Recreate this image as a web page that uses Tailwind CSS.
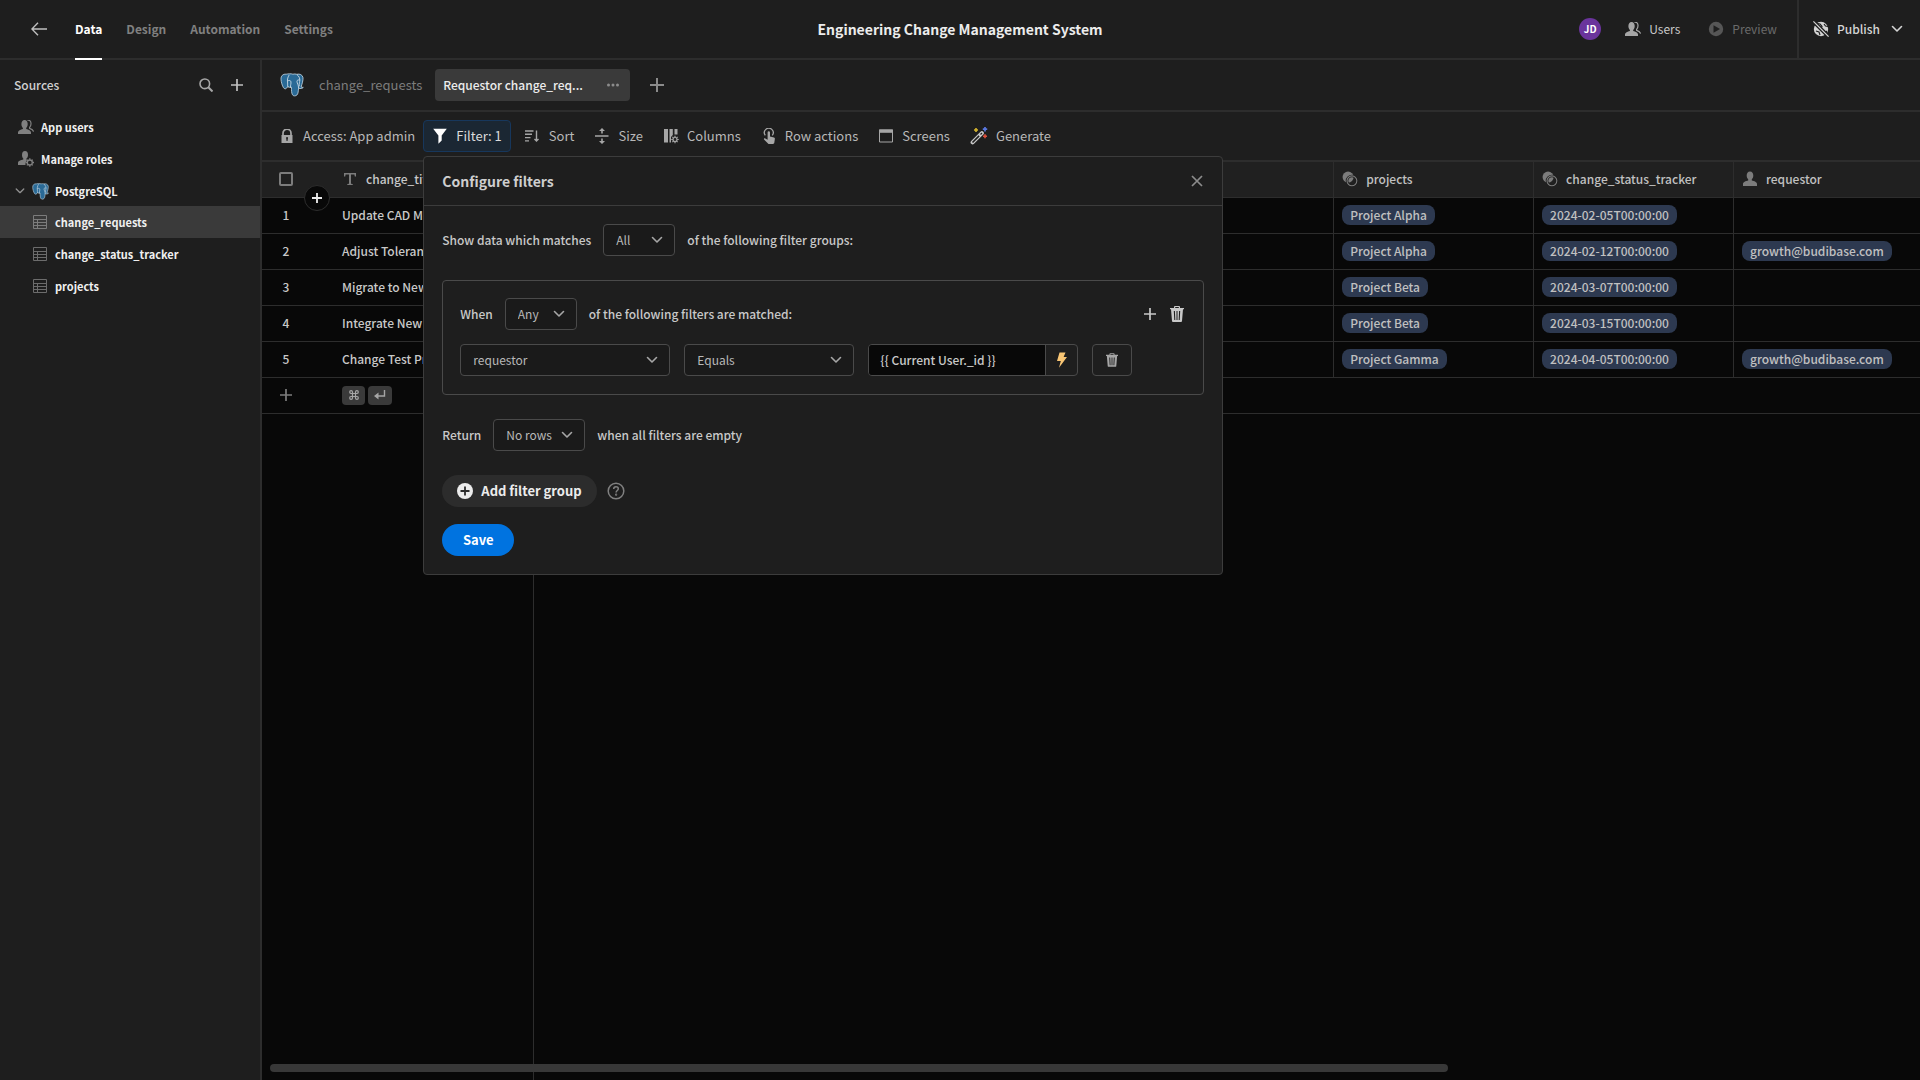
<!DOCTYPE html>
<html lang="en">
<head>
<meta charset="utf-8">
<title>Engineering Change Management System</title>
<script src="https://cdn.jsdelivr.net/npm/@tailwindcss/browser@4"></script>
</head>
<body class="h-screen overflow-hidden bg-[#1e1e1e] font-['Noto_Sans_CJK_SC',sans-serif] text-[12px] leading-5 text-[#c8c8c8]">
<svg class="hidden" aria-hidden="true">
  <defs>
    <symbol id="chev" viewBox="0 0 12 12"><path d="M1.500 3.500 6 8l4.500-4.500" fill="none" stroke="currentColor" stroke-width="1.600" stroke-linecap="round" stroke-linejoin="round"/></symbol>
    <symbol id="plus" viewBox="0 0 12 12"><path d="M6 0v12M0 6h12" fill="none" stroke="currentColor" stroke-width="1.700"/></symbol>
    <symbol id="users" viewBox="0 0 16 14"><path d="M6.600 0C4.500 0 3.400 1.700 3.400 4c0 1.600.6 3 1.500 3.900v1C2.600 9.400 0 10.400 0 12.300V14h13v-1.700c0-1.900-2.500-2.900-4.800-3.400v-1C9.100 7 9.700 5.600 9.700 4 9.700 1.700 8.700 0 6.600 0z" fill="currentColor"/><path d="M9.500 .4c2-.8 3.600.8 3.500 3.300 0 1.500-.6 2.800-1.400 3.600v1c1.700.5 3.600 1.700 4 3.400" fill="none" stroke="currentColor" stroke-width="1.200"/></symbol>
    <symbol id="trash" viewBox="0 0 14 16"><path fill-rule="evenodd" d="M5 0h4a1 1 0 0 1 1 1v1h4v1.300h-1L12 15a1 1 0 0 1-1 1H3a1 1 0 0 1-1-1L1 3.300H0V2h4V1a1 1 0 0 1 1-1zm.2 1.100V2h3.600v-.9zM3.800 5l.5 9h1L4.900 5zm2.700 0v9h1V5zm2.600 0-.4 9h1l.5-9z" fill="currentColor"/></symbol>
    <symbol id="tbl" viewBox="0 0 14 14"><path d="M.5.5h13v13H.5zM.5 4.500h13M.5 7.500h13M.5 10.500h13M4.500 4.500v9" fill="none" stroke="currentColor"/></symbol>
    <symbol id="rel" viewBox="0 0 14 15"><circle cx="5.200" cy="5.700" r="5.200" fill="currentColor"/><circle cx="8.800" cy="9.200" r="4.600" fill="none" stroke="#1e1e1e" stroke-width="2.400"/><circle cx="8.800" cy="9.200" r="4.600" fill="none" stroke="currentColor" stroke-width="1"/></symbol>
    <symbol id="pg" viewBox="0 0 24 24">
      <path d="M6.200 1.200C2.800.8.800 3 1 6.300c.1 2.500 1.200 6.400 2.500 8.400 1 1.500 2.300 1.400 3.200.3l1.100-1.300c.6.400 1.300.6 2 .6h1.700c-.1 2.600 0 5.700.9 7.400.8 1.500 3.300 1.500 4.500.3 1-1 1.200-2.500 1.400-4.200l.3-2.600c2 .6 3.700.4 4.700-.8-.7-.1-1.500 0-2.200-.4C22 11.200 23.300 7 23 4.700 22.600 1.800 19.600.5 16.800 1.300c-1.200-.4-2.600-.5-3.900-.1-2-.7-4.700-.4-6.700 0z" fill="#2a6a96" stroke="#c9dbe6" stroke-width=".8" stroke-linejoin="round"/>
      <path d="M9 2.200C7.400 4.500 7.200 7.500 7.600 10c.2 1.500-.3 2.600.3 3.700M8 7.800c1.200-.6 2.600-.5 2.900.9.400 1.900-.6 3.300-.4 5.500M17.200 1.800c1.900 1.400 2.800 3.800 2.600 5.800-.1 1.500-.8 2.600-.6 5.300M19.500 7c-1.300-.3-2.500 0-2.500 1.500 0 2.200 1.600 2.800 1.600 6.500" fill="none" stroke="#dbe6ee" stroke-width=".8" stroke-linecap="round"/>
    </symbol>
  </defs>
</svg>

<div class="flex h-full flex-col">
  <header class="flex h-[60px] shrink-0 items-stretch border-b-2 border-[#2d2d2d]">
    <div class="flex flex-1 items-stretch">
      <button class="mr-7 ml-[31px] text-[#c0c0c0]" aria-label="Back"><svg class="h-3.5 w-4" viewBox="0 0 16 14" fill="none" stroke="currentColor" stroke-width="1.400"><path d="M7 .8.900 7 7 13.200M1 7h15"/></svg></button>
      <nav class="-mb-0.5 flex gap-6 font-bold text-[#808080]">
        <a href="#" class="flex items-center border-b-2 border-white text-white">Data</a>
        <a href="#" class="flex items-center border-b-2 border-transparent">Design</a>
        <a href="#" class="flex items-center border-b-2 border-transparent">Automation</a>
        <a href="#" class="flex items-center border-b-2 border-transparent">Settings</a>
      </nav>
    </div>
    <h1 class="flex items-center text-[14px] font-bold text-[#ececec]">Engineering Change Management System</h1>
    <div class="flex flex-1 items-stretch justify-end">
      <div class="flex items-center">
        <span class="flex size-[22px] items-center justify-center rounded-full bg-[#6a349c] text-[10px] font-bold text-white">JD</span>
        <button class="ml-6 flex items-center gap-2"><svg class="h-3.5 w-4 text-[#a6a6a6]"><use href="#users"/></svg>Users</button>
        <button class="ml-7 flex items-center gap-2 text-[#6a6a6a]"><svg class="size-4" viewBox="0 0 16 16"><circle cx="8" cy="8" r="7.200" fill="#565656"/><path d="M5.500 4.300 12 8l-6.500 3.700z" fill="#1e1e1e"/></svg>Preview</button>
      </div>
      <button class="ml-5 flex items-center border-l-2 border-[#2d2d2d] pr-[17px] pl-3.5 font-medium text-[#d4d4d4]">
        <svg class="mr-2 size-4" viewBox="0 0 16 16"><circle cx="8" cy="8" r="7.200" fill="currentColor"/><path d="M4.500 2.500 7 3l2 2.300L8 8M3 10l3 1 1 3M11 3l1.500 2 2.500.5M12 12l2-2" stroke="#1e1e1e" stroke-width="1.200" fill="none"/><path d="M-.5 1 14.900 16.400M1-.5 16.400 14.900" stroke="#1e1e1e" stroke-width="1.600"/><path d="M.4.400 15.600 15.600" stroke="currentColor" stroke-width="1.200"/></svg>Publish
        <svg class="ml-[11px] size-3"><use href="#chev"/></svg>
      </button>
    </div>
  </header>

  <div class="flex min-h-0 flex-1">
    <aside class="w-[262px] shrink-0 border-r-2 border-[#2d2d2d]">
      <div class="flex h-[50px] items-center pr-[17px] pl-3.5 font-medium text-[#d0d0d0]">
        <span class="flex-1">Sources</span>
        <button class="mr-[18px] text-[#a6a6a6]" aria-label="Search"><svg class="size-3.5" viewBox="0 0 14 14" fill="none" stroke="currentColor"><circle cx="5.800" cy="5.800" r="4.800" stroke-width="1.600"/><path d="m9.300 9.300 4.200 4.200" stroke-width="2"/></svg></button>
        <button class="text-[#c0c0c0]" aria-label="Add source"><svg class="size-3"><use href="#plus"/></svg></button>
      </div>
      <nav class="text-[11px] font-bold text-[#f0f0f0]">
        <a href="#" class="mt-px flex h-8 items-center pl-[18px]"><svg class="mr-[7px] h-3.5 w-4 text-[#808080]"><use href="#users"/></svg>App users</a>
        <a href="#" class="flex h-8 items-center pl-[18px]"><svg class="mr-[7px] size-4 text-[#808080]" viewBox="0 0 16 16"><path d="M7 0C5 0 4 1.700 4 3.900c0 1.500.5 2.900 1.300 3.700v1C3 9.100 0 10 0 12v2h7.500c-.3-2 .5-4 1.500-5l-.6-.5V7.600C9.500 6.800 10 5.400 10 3.900 10 1.700 9 0 7 0z" fill="currentColor"/><circle cx="11.800" cy="11.500" r="2.500" fill="none" stroke="currentColor" stroke-width="1.300"/><path d="M11.800 7.300v1.500M11.800 14.200v1.500M7.600 11.500h1.500M14.500 11.500H16M8.900 8.600l1 1M13.700 13.400l1 1M14.700 8.600l-1 1M9.900 13.400l-1 1" stroke="currentColor" stroke-width="1.300"/></svg>Manage roles</a>
        <a href="#" class="flex h-8 items-center pl-[15px]"><svg class="mr-[7px] size-2.5 text-[#909090]" viewBox="0 0 12 12"><use href="#chev"/></svg><svg class="mr-1.5 size-[17px]"><use href="#pg"/></svg>PostgreSQL</a>
        <a href="#" class="-mt-px flex h-8 items-center bg-[#3a3a3a] pl-[33px]"><svg class="mr-2 size-3.5 text-[#7c7c7c]"><use href="#tbl"/></svg>change_requests</a>
        <a href="#" class="flex h-8 items-center pl-[33px]"><svg class="mr-2 size-3.5 text-[#6c6c6c]"><use href="#tbl"/></svg>change_status_tracker</a>
        <a href="#" class="flex h-8 items-center pl-[33px]"><svg class="mr-2 size-3.5 text-[#6c6c6c]"><use href="#tbl"/></svg>projects</a>
      </nav>
    </aside>

    <main class="flex min-w-0 flex-1 flex-col">
      <div class="flex h-[52px] shrink-0 items-center border-b-2 border-[#2d2d2d] pl-[18px]">
        <svg class="size-6"><use href="#pg"/></svg>
        <a href="#" class="ml-[15px] text-[13px] text-[#7c7c7c]">change_requests</a>
        <div class="ml-[13px] flex h-8 w-[195px] items-center rounded bg-[#3a3a3a] pr-2.5 pl-2">
          <a href="#" class="font-medium whitespace-nowrap text-[#ececec]">Requestor change_req...</a>
          <button class="ml-auto text-[#8c8c8c]" aria-label="View options"><svg class="h-1 w-3.5" viewBox="0 0 14 4" fill="currentColor"><circle cx="2.500" cy="2" r="1.500"/><circle cx="7" cy="2" r="1.500"/><circle cx="11.500" cy="2" r="1.500"/></svg></button>
        </div>
        <button class="ml-5 text-[#8c8c8c]" aria-label="Add view"><svg class="size-3.5" viewBox="0 0 12 12"><use href="#plus"/></svg></button>
      </div>

      <div class="flex h-[50px] shrink-0 items-center gap-1 border-b-2 border-[#2d2d2d] pl-2 text-[13px] text-[#b8b8b8]">
        <button class="flex h-8 items-center gap-2 pr-1 pl-[9px]"><svg class="h-3.5 w-4 text-[#a6a6a6]" viewBox="0 0 16 14"><path d="M4 6V4.200a4 4 0 0 1 8 0V6" fill="none" stroke="currentColor" stroke-width="1.700"/><path fill-rule="evenodd" d="M3 6h10.500v8h-11V6zm4.200 3.500.4 2.500h.9l.4-2.500a1 1 0 1 0-1.700 0z" fill="currentColor"/></svg>Access: App admin</button>
        <div class="relative mr-0.5">
          <button class="flex h-8 items-center gap-2 rounded border border-[#17375c] bg-[#1b2733] px-2 text-[#dcdcdc]"><svg class="size-4" viewBox="0 0 16 16"><path d="M1.200.8h13.600L9.700 7.500v5L6.400 15.800V7.500z" fill="#fff"/></svg>Filter: 1</button>
          <section class="absolute top-9 left-0 z-10 w-[800px] rounded border border-[#3c3c3c] bg-[#1e1e1e] text-[12px] font-medium text-[#c8c8c8]">
            <div class="flex h-[49px] items-center justify-between border-b border-[#3c3c3c] pr-[19px] pl-[18px]">
              <h2 class="text-[14px] font-bold text-[#cecece]">Configure filters</h2>
              <button class="text-[#8c8c8c]" aria-label="Close"><svg class="size-3" viewBox="0 0 12 12"><path d="m1 1 10 10M11 1 1 11" stroke="currentColor" stroke-width="1.700"/></svg></button>
            </div>
            <div class="flex flex-col items-start gap-6 px-[18px] pt-[18px] pb-[18px]">
              <div class="flex items-center gap-3">
                <label for="match-groups">Show data which matches</label>
                <div class="grid w-[72px] items-center"><select id="match-groups" class="col-start-1 row-start-1 h-8 w-full appearance-none rounded border border-[#4a4a4a] bg-[#1a1a1a] pl-3 font-normal text-[#b8b8b8]"><option>All</option></select><svg class="pointer-events-none col-start-1 row-start-1 mr-3 size-3 justify-self-end text-[#a6a6a6]"><use href="#chev"/></svg></div>
                <span>of the following filter groups:</span>
              </div>
              <div class="w-full rounded border border-[#4a4a4a] p-[17px] pb-[18px]">
                <div class="flex items-center gap-3">
                  <label for="match-filters">When</label>
                  <div class="grid w-[72px] items-center"><select id="match-filters" class="col-start-1 row-start-1 h-8 w-full appearance-none rounded border border-[#4a4a4a] bg-[#1a1a1a] pl-3 font-normal text-[#b8b8b8]"><option>Any</option></select><svg class="pointer-events-none col-start-1 row-start-1 mr-3 size-3 justify-self-end text-[#a6a6a6]"><use href="#chev"/></svg></div>
                  <span>of the following filters are matched:</span>
                  <div class="mr-0.5 ml-auto flex items-center gap-3.5 text-[#c8c8c8]">
                    <button aria-label="Add filter"><svg class="size-3"><use href="#plus"/></svg></button>
                    <button aria-label="Delete group"><svg class="h-4 w-3.5"><use href="#trash"/></svg></button>
                  </div>
                </div>
                <div class="mt-3.5 flex gap-3.5">
                  <div class="grid w-[210px] items-center"><select aria-label="Field" class="col-start-1 row-start-1 h-8 w-full appearance-none rounded border border-[#4a4a4a] bg-[#1a1a1a] pl-3 font-normal text-[#b8b8b8]"><option>requestor</option></select><svg class="pointer-events-none col-start-1 row-start-1 mr-3 size-3 justify-self-end text-[#a6a6a6]"><use href="#chev"/></svg></div>
                  <div class="grid w-[170px] items-center"><select aria-label="Operator" class="col-start-1 row-start-1 h-8 w-full appearance-none rounded border border-[#4a4a4a] bg-[#1a1a1a] pl-3 font-normal text-[#b8b8b8]"><option>Equals</option></select><svg class="pointer-events-none col-start-1 row-start-1 mr-3 size-3 justify-self-end text-[#a6a6a6]"><use href="#chev"/></svg></div>
                  <div class="flex h-8 w-[210px] overflow-hidden rounded border border-[#4a4a4a]">
                    <input aria-label="Value" value="{{ Current User._id }}" class="w-0 flex-1 bg-[#080808] pl-[11px] text-[#c8c8c8]">
                    <button class="flex w-8 items-center justify-center border-l border-[#4a4a4a]" aria-label="Bindings"><svg class="h-4 w-3" viewBox="0 0 12 16"><path d="M3.500.5h6L7.600 5H11L3 15.800 4.800 9H1z" fill="#f8c574"/></svg></button>
                  </div>
                  <button class="flex h-8 w-10 items-center justify-center rounded border border-[#4a4a4a] text-[#a6a6a6]" aria-label="Delete filter"><svg class="h-3.5 w-3"><use href="#trash"/></svg></button>
                </div>
              </div>
              <div class="flex items-center gap-3">
                <label for="empty">Return</label>
                <div class="grid w-[92px] items-center"><select id="empty" class="col-start-1 row-start-1 h-8 w-full appearance-none rounded border border-[#4a4a4a] bg-[#1a1a1a] pl-3 font-normal text-[#b8b8b8]"><option>No rows</option></select><svg class="pointer-events-none col-start-1 row-start-1 mr-3 size-3 justify-self-end text-[#a6a6a6]"><use href="#chev"/></svg></div>
                <span>when all filters are empty</span>
              </div>
              <div class="flex items-center gap-2.5">
                <button class="flex h-8 items-center gap-2 rounded-full bg-[#2c2c2c] px-[15px] text-[13px] font-bold text-[#ececec]"><svg class="size-4" viewBox="0 0 16 16"><circle cx="8" cy="8" r="8" fill="currentColor"/><path d="M8 3.500v9M3.500 8h9" stroke="#2c2c2c" stroke-width="1.800"/></svg>Add filter group</button>
                <button class="text-[#808080]" aria-label="Help"><svg class="size-[18px]" viewBox="0 0 18 18" fill="none" stroke="currentColor" stroke-width="1.500"><circle cx="9" cy="9" r="7.800"/><path d="M6.700 7.100c0-1.500 1-2.300 2.300-2.300s2.300.8 2.300 2c0 1.700-2.200 1.700-2.200 3.700"/><circle cx="9.100" cy="12.700" r=".4"/></svg></button>
              </div>
              <button class="-mt-[7px] h-8 w-[72px] rounded-full bg-[#0073e0] text-[13px] font-bold text-white">Save</button>
            </div>
          </section>
        </div>
        <button class="flex h-8 items-center gap-2 px-2"><svg class="size-4 text-[#a6a6a6]" viewBox="0 0 16 16" fill="none" stroke="currentColor" stroke-width="1.400"><path d="M0 3h8.500M0 6.300h7M0 9.600h5.500M0 12.900h4M11.500 2.500v10.500M9.500 11l2 2 2-2"/></svg>Sort</button>
        <button class="flex h-8 items-center gap-2 px-2"><svg class="size-4 text-[#a6a6a6]" viewBox="0 0 16 16" fill="none" stroke="currentColor" stroke-width="1.600"><path d="M1 8h13.500M8 2v3.500M8 10.500V14"/><path d="m8 0 3 3H5zM8 16l-3-3h6z" fill="currentColor" stroke="none"/></svg>Size</button>
        <button class="flex h-8 items-center gap-2 px-2"><svg class="size-4 text-[#a6a6a6]" viewBox="0 0 16 16"><path d="M1 1h4v13.500H1zM6.500 1h3.300v6L8 9v5.500H6.500zM11.500 1h3v5.500h-3z" fill="currentColor"/><circle cx="12" cy="11.500" r="2" fill="none" stroke="currentColor" stroke-width="1.200"/><path d="M12 7.800v1.500M12 13.700v1.500M8.300 11.500h1.500M14.200 11.500h1.500M9.400 8.900l1 1M13.600 13.100l1 1M14.600 8.900l-1 1M10.400 13.100l-1 1" stroke="currentColor" stroke-width="1.200"/></svg>Columns</button>
        <button class="flex h-8 items-center gap-2 px-2"><svg class="size-4 text-[#a6a6a6]" viewBox="0 0 16 16"><path d="M4.300 7.300a4.400 4.400 0 1 1 7 0" fill="none" stroke="currentColor" stroke-width="1.300"/><path d="M6.600 4.500a1.200 1.200 0 0 1 2.400 0v4l4 .9c.7.200 1 .7.900 1.400l-.6 4c-.1.700-.6 1.200-1.300 1.200H7.500L3 11.500c-.4-.8.500-1.500 1.300-1l2.300 1.300z" fill="currentColor"/></svg>Row actions</button>
        <button class="flex h-8 items-center gap-2 px-2"><svg class="size-4 text-[#a6a6a6]" viewBox="0 0 16 16"><path d="M1.500 2h13v12h-13z" fill="none" stroke="currentColor"/><path d="M1 1.500h14v3.300H1z" fill="currentColor"/></svg>Screens</button>
        <button class="flex h-8 items-center gap-2 px-2"><svg class="size-[18px]" viewBox="0 0 18 18"><path d="m2.600 15.400 9.300-9.300" stroke="#c8c8c8" stroke-width="4" stroke-linecap="round"/><path d="m2.500 15.500 6.600-6.600" stroke="#1e1e1e" stroke-width="1.600"/><path d="m10.500 7.500 1.500-1.500" stroke="#1e1e1e" stroke-width="1.200"/><path d="M6 1v4M4 3h4" stroke="#d8b62e" stroke-width="1.600"/><path d="M15 0v4.400M12.800 2.200h4.400" stroke="#5a78e0" stroke-width="1.700"/><path d="M15 7.200v4M13 9.200h4" stroke="#e0503c" stroke-width="1.600"/></svg>Generate</button>
      </div>

      <div class="relative flex min-h-0 flex-1 bg-[#080808] font-medium">
        <div class="w-[272px] shrink-0 border-r border-[#2d2d2d]">
          <table class="w-full table-fixed border-collapse text-left">
            <thead><tr class="h-[35px] border-b border-[#2d2d2d] bg-[#202020]"><th class="w-[72px] pl-[17px]"><input type="checkbox" aria-label="Select all rows" class="block size-3.5 appearance-none rounded-[2px] border-2 border-[#7c7c7c]"></th><th class="pl-2 font-medium"><span class="flex items-center gap-2 whitespace-nowrap"><svg class="size-4 text-[#7c7c7c]" viewBox="0 0 16 16"><path d="M2 2h12v3.500h-1.200l-.4-1.900H9v9.200l1.700.3V14H5.300v-.9l1.700-.3V3.600H3.600l-.4 1.900H2z" fill="currentColor"/></svg>change_title</span></th></tr></thead>
            <tbody>
              <tr class="h-9 border-b border-[#2d2d2d]"><td class="pr-6 text-center">1</td><td class="truncate pl-2">Update CAD Model</td></tr>
              <tr class="h-9 border-b border-[#2d2d2d]"><td class="pr-6 text-center">2</td><td class="truncate pl-2">Adjust Tolerances</td></tr>
              <tr class="h-9 border-b border-[#2d2d2d]"><td class="pr-6 text-center">3</td><td class="truncate pl-2">Migrate to New Material</td></tr>
              <tr class="h-9 border-b border-[#2d2d2d]"><td class="pr-6 text-center">4</td><td class="truncate pl-2">Integrate New Sensor</td></tr>
              <tr class="h-9 border-b border-[#2d2d2d]"><td class="pr-6 text-center">5</td><td class="truncate pl-2">Change Test Procedure</td></tr>
              <tr class="h-9 border-b border-[#2d2d2d]"><td class="pl-[18px]"><button class="block text-[#7c7c7c]" aria-label="Add row"><svg class="size-3"><use href="#plus"/></svg></button></td><td class="pl-2"><span class="flex gap-[3px] text-[#a6a6a6]"><kbd class="flex h-[19px] w-[23px] items-center justify-center rounded bg-[#3a3a3a]"><svg class="size-2.5" viewBox="0 0 10 10" fill="none" stroke="currentColor" stroke-width="1.200"><path d="M3.500 3.500h3v3h-3zM3.500 3.500H2A1.400 1.400 0 1 1 3.500 2zM6.500 3.500V2A1.400 1.400 0 1 1 8 3.500zM6.500 6.500H8A1.400 1.400 0 1 1 6.500 8zM3.500 6.500V8A1.400 1.400 0 1 1 2 6.500z"/></svg></kbd><kbd class="flex h-[19px] w-6 items-center justify-center rounded bg-[#3a3a3a]"><svg class="h-2.5 w-3" viewBox="0 0 12 10"><path d="M10.500 0v6H3" fill="none" stroke="currentColor" stroke-width="1.400"/><path d="M4.500 2.500v7L0 6z" fill="currentColor"/></svg></kbd></span></td></tr>
            </tbody>
          </table>
        </div>
        <div class="min-w-0 flex-1 overflow-hidden">
          <table class="w-[1400px] table-fixed border-collapse text-left text-[#c0c0c0]">
            <thead><tr class="h-[35px] border-b border-[#2d2d2d] bg-[#202020] *:border-r *:border-[#2d2d2d] *:pl-2 *:font-medium">
              <th></th><th></th><th></th><th></th>
              <th><span class="flex items-center gap-2"><svg class="size-4 text-[#7c7c7c]"><use href="#rel"/></svg>projects</span></th>
              <th><span class="flex items-center gap-2"><svg class="size-4 text-[#7c7c7c]"><use href="#rel"/></svg>change_status_tracker</span></th>
              <th><span class="flex items-center gap-2"><svg class="size-4 text-[#7c7c7c]" viewBox="0 0 16 16"><path d="M8 .5C5.800.5 4.700 2.200 4.700 4.500c0 1.600.6 3 1.500 3.800v1.200C3.700 10 1 11 1 13v2h14v-2c0-2-2.700-3-5.200-3.500V8.300c.9-.8 1.500-2.200 1.500-3.800 0-2.300-1.100-4-3.300-4z" fill="currentColor"/></svg>requestor</span></th>
            </tr></thead>
            <tbody id="rows"></tbody>
          </table>
        </div>
        <button class="absolute top-[23px] left-[42px] flex size-[26px] items-center justify-center rounded-full border border-[#2d2d2d] bg-[#080808] text-[#ececec]" aria-label="Insert row"><svg class="size-2.5" viewBox="0 0 12 12"><path d="M6 0v12M0 6h12" fill="none" stroke="currentColor" stroke-width="2.200"/></svg></button>
        <div class="absolute right-[472px] bottom-2 left-2 h-2 rounded-full bg-[#383838]"></div>
      </div>
    </main>
  </div>
</div>
<script>
  const rows = [
    ['Project Alpha', '2024-02-05T00:00:00', ''],
    ['Project Alpha', '2024-02-12T00:00:00', 'growth@budibase.com'],
    ['Project Beta', '2024-03-07T00:00:00', ''],
    ['Project Beta', '2024-03-15T00:00:00', ''],
    ['Project Gamma', '2024-04-05T00:00:00', 'growth@budibase.com'],
  ];
  const pill = t => t ? `<span class="flex h-5 w-fit items-center rounded-lg bg-[#2d3950] px-2">${t}</span>` : '';
  document.getElementById('rows').innerHTML = rows.map(r =>
    `<tr class="h-9 border-b border-[#2d2d2d] *:border-r *:border-[#2d2d2d] *:pl-2"><td></td><td></td><td></td><td></td>${r.map(t => `<td>${pill(t)}</td>`).join('')}</tr>`
  ).join('') + '<tr class="h-9 border-b border-[#2d2d2d]"><td colspan="7"></td></tr>';
</script>
</body>
</html>
